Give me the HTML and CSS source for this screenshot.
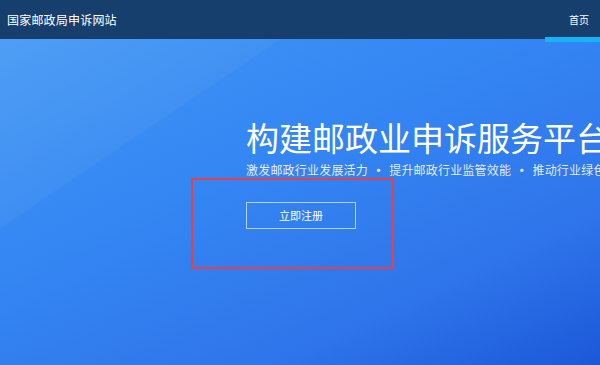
FILE: index.html
```html
<!DOCTYPE html>
<html lang="zh-CN">
<head>
  <meta charset="UTF-8" />
  <meta name="viewport" content="width=device-width, initial-scale=1.0" />
  <title>国家邮政局申诉网站</title>
  <link rel="stylesheet" href="styles.css">
</head>
<body>
  <header class="site-header">
    <div class="site-title">国家邮政局申诉网站</div>
    <nav class="site-nav">
      <div class="nav-item active">首页</div>
    </nav>
  </header>
  <main class="hero">
    <div class="hero-content">
      <h1 class="hero-title">构建邮政业申诉服务平台</h1>
      <div class="hero-sub">激发邮政行业发展活力<span class="dot">•</span>提升邮政行业监管效能<span class="dot">•</span>推动行业绿色发展</div>
      <div class="hero-actions">
        <button class="btn-outline">立即注册</button>
        <div class="highlight-box"></div>
      </div>
    </div>
  </main>
</body>
</html>
```

FILE: styles.css
```css
:root {
  --header-bg: #163f6e;
  --accent-cyan: #17b2f7;
  --text-white: #ffffff;
  --highlight: #e8404a;
  --font-primary: "Microsoft YaHei", "Noto Sans CJK SC", "Noto Sans", sans-serif;
}
html, body {
  margin: 0;
  height: 100%;
}
body {
  font-family: var(--font-primary);
  color: var(--text-white);
  display: flex;
  flex-direction: column;
  overflow: hidden;
}
.site-header {
  height: 39px;
  flex-shrink: 0;
  background: var(--header-bg);
  display: flex;
  justify-content: space-between;
  align-items: stretch;
  position: relative;
  z-index: 2;
}
.site-title {
  display: flex;
  align-items: center;
  padding-left: 7px;
  font-size: 12px;
  letter-spacing: 0.2px;
}
.site-nav {
  display: flex;
}
.nav-item {
  position: relative;
  display: flex;
  align-items: center;
  padding: 0 11px 0 24px;
  font-size: 10px;
  cursor: pointer;
}
.nav-item.active::after {
  content: "";
  position: absolute;
  left: 0;
  right: 0;
  bottom: -3px;
  height: 5px;
  background: var(--accent-cyan);
}
.hero {
  flex: 1;
  overflow: hidden;
  background:
    linear-gradient(146deg, rgba(255, 255, 255, 0.08) 0, rgba(255, 255, 255, 0.04) 156px, transparent 158px),
    linear-gradient(155deg, #3f96f3 0%, #3486f3 40%, #2f74ea 75%, #1b58d8 100%);
}
.hero-content {
  margin-left: 246px;
  padding-top: 78px;
  display: flex;
  flex-direction: column;
  align-items: flex-start;
}
.hero-title {
  margin: 0;
  font-size: 33px;
  font-weight: 400;
  line-height: 40px;
  white-space: nowrap;
}
.hero-sub {
  margin-top: 4px;
  font-size: 12px;
  line-height: 18px;
  letter-spacing: 0.2px;
  white-space: nowrap;
  color: rgba(255, 255, 255, 0.88);
}
.dot {
  margin: 0 4px;
  font-size: 13px;
  font-weight: 700;
}
.hero-actions {
  position: relative;
  margin-top: 22px;
}
.btn-outline {
  width: 110px;
  height: 27px;
  border: 1px solid rgba(255, 255, 255, 0.65);
  background: transparent;
  color: var(--text-white);
  font-family: var(--font-primary);
  font-size: 11px;
  cursor: pointer;
}
.highlight-box {
  position: absolute;
  left: -55px;
  top: -23px;
  width: 199px;
  height: 87px;
  border: 2px solid var(--highlight);
  pointer-events: none;
}
```
